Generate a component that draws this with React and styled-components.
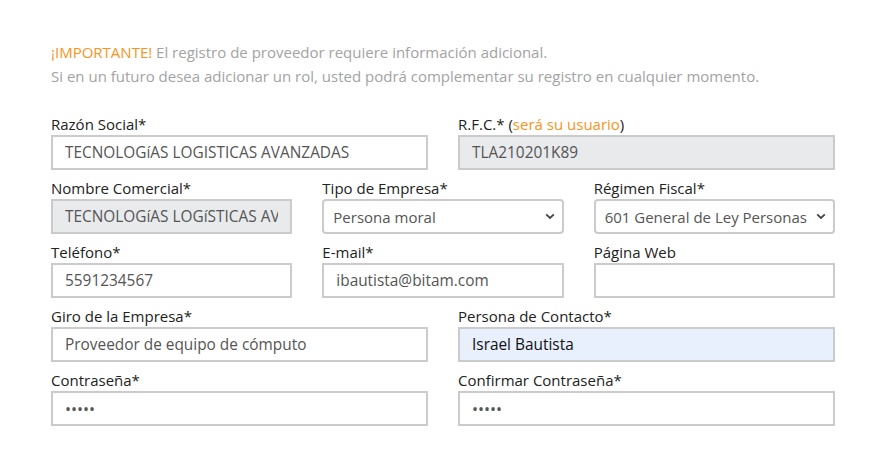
import React from "react";
import styled, { createGlobalStyle } from "styled-components";

const Global = createGlobalStyle`
  html, body { margin: 0; padding: 0; background: #fff; }
  body { font-family: "Open Sans", "Noto Sans", sans-serif; }
  * { box-sizing: border-box; }
`;

const Page = styled.div`
  padding: 40px 45px 0 51px;
  width: 880px;
`;

const Notice = styled.p`
  margin: 0 0 25px;
  font-size: 15px;
  line-height: 24px;
  color: #a3a3a3;
  white-space: nowrap;
`;

const Orange = styled.span`
  color: #f7941d;
`;

const Row = styled.div`
  display: grid;
  grid-template-columns: repeat(${(p) => p.$cols}, 1fr);
  column-gap: 30px;
  width: 784px;
  margin-bottom: 7px;
`;

const Field = styled.div`
  display: flex;
  flex-direction: column;
  min-width: 0;
`;

const Label = styled.label`
  font-size: 15px;
  line-height: 22px;
  color: #222;
  white-space: nowrap;
`;

const Input = styled.input`
  width: 100%;
  height: 35px;
  border: 2px solid #cbcbcb;
  border-radius: 0;
  padding: 0 12px;
  font-family: inherit;
  font-size: 15.4px;
  color: ${(p) => (p.$autofill ? "#111" : "#555")};
  background: ${(p) => (p.$autofill ? "#e8f0fe" : p.disabled ? "#e8eaec" : "#fff")};
  outline: none;
  opacity: 1;
  -webkit-text-fill-color: ${(p) => (p.$autofill ? "#111" : "#555")};
  &[type="password"] { font-size: 16px; letter-spacing: 0; }
`;

const SelectWrap = styled.div`
  position: relative;
`;

const Select = styled.select`
  width: 100%;
  height: 35px;
  border: 2px solid #cbcbcb;
  border-radius: 4px;
  padding: 0 22px 0 9px;
  font-family: inherit;
  font-size: 15px;
  color: #555;
  background: #fff;
  appearance: none;
  outline: none;
`;

const Chevron = styled.svg`
  position: absolute;
  right: 9px;
  top: 14px;
  width: 10px;
  height: 7px;
  pointer-events: none;
`;

const Arrow = () => (
  <Chevron viewBox="0 0 10 7">
    <path d="M1.2 1.4 L5 5 L8.8 1.4" fill="none" stroke="#444" strokeWidth="1.8" />
  </Chevron>
);

export default function App() {
  return (
    <>
      <Global />
      <Page>
        <Notice>
          <Orange>¡IMPORTANTE!</Orange> El registro de proveedor requiere información adicional.
          <br />
          Si en un futuro desea adicionar un rol, usted podrá complementar su registro en cualquier momento.
        </Notice>

        <Row $cols={2}>
          <Field>
            <Label>Razón Social*</Label>
            <Input readOnly value="TECNOLOGíAS LOGISTICAS AVANZADAS" />
          </Field>
          <Field>
            <Label>
              R.F.C.* (<Orange>será su usuario</Orange>)
            </Label>
            <Input disabled value="TLA210201K89" />
          </Field>
        </Row>

        <Row $cols={3}>
          <Field>
            <Label>Nombre Comercial*</Label>
            <Input disabled value="TECNOLOGíAS LOGíSTICAS AVANZADAS" />
          </Field>
          <Field>
            <Label>Tipo de Empresa*</Label>
            <SelectWrap>
              <Select defaultValue="moral">
                <option value="moral">Persona moral</option>
                <option value="fisica">Persona física</option>
              </Select>
              <Arrow />
            </SelectWrap>
          </Field>
          <Field>
            <Label>Régimen Fiscal*</Label>
            <SelectWrap>
              <Select defaultValue="601">
                <option value="601">601 General de Ley Personas Morales</option>
              </Select>
              <Arrow />
            </SelectWrap>
          </Field>
        </Row>

        <Row $cols={3}>
          <Field>
            <Label>Teléfono*</Label>
            <Input readOnly value="5591234567" />
          </Field>
          <Field>
            <Label>E-mail*</Label>
            <Input readOnly value="ibautista@bitam.com" />
          </Field>
          <Field>
            <Label>Página Web</Label>
            <Input readOnly value="" />
          </Field>
        </Row>

        <Row $cols={2}>
          <Field>
            <Label>Giro de la Empresa*</Label>
            <Input readOnly value="Proveedor de equipo de cómputo" />
          </Field>
          <Field>
            <Label>Persona de Contacto*</Label>
            <Input readOnly $autofill value="Israel Bautista" />
          </Field>
        </Row>

        <Row $cols={2}>
          <Field>
            <Label>Contraseña*</Label>
            <Input type="password" readOnly value="12345" />
          </Field>
          <Field>
            <Label>Confirmar Contraseña*</Label>
            <Input type="password" readOnly value="12345" />
          </Field>
        </Row>
      </Page>
    </>
  );
}
